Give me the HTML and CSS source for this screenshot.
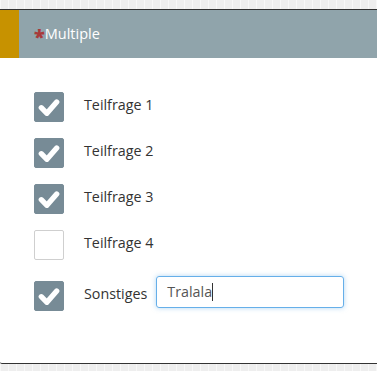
FILE: index.html
```html
<!DOCTYPE html>
<html lang="de">
<head>
    <meta charset="UTF-8">
    <meta name="viewport" content="width=device-width, initial-scale=1.0">
    <title>Multiple</title>
    <link rel="stylesheet" href="styles.css">
</head>
<body>
    <div class="question">
        <div class="question-head">
            <div class="marker"></div>
            <div class="title"><span class="required">*</span>Multiple</div>
        </div>

        <div class="options">
            <div class="option">
                <div class="checkbox checked"><svg viewBox="0 0 20 20"><path d="M4.5 10.5 L8.5 14.5 L15.5 6.5"/></svg></div>
                <div class="option-text">Teilfrage 1</div>
            </div>
            <div class="option">
                <div class="checkbox checked"><svg viewBox="0 0 20 20"><path d="M4.5 10.5 L8.5 14.5 L15.5 6.5"/></svg></div>
                <div class="option-text">Teilfrage 2</div>
            </div>
            <div class="option">
                <div class="checkbox checked"><svg viewBox="0 0 20 20"><path d="M4.5 10.5 L8.5 14.5 L15.5 6.5"/></svg></div>
                <div class="option-text">Teilfrage 3</div>
            </div>
            <div class="option">
                <div class="checkbox"></div>
                <div class="option-text">Teilfrage 4</div>
            </div>
            <div class="option other">
                <div class="checkbox checked"><svg viewBox="0 0 20 20"><path d="M4.5 10.5 L8.5 14.5 L15.5 6.5"/></svg></div>
                <div class="option-text">Sonstiges</div>
                <div class="other-input">Tralala<span class="caret"></span></div>
            </div>
        </div>
    </div>
</body>
</html>
```

FILE: styles.css
```css
* {
    margin: 0;
    padding: 0;
    box-sizing: border-box;
    font-family: "Open Sans", sans-serif;
}
body {
    padding-top: 9px;
    background-color: #eeeeee;
    background-image: repeating-linear-gradient(90deg, rgba(255,255,255,0.5) 0 1px, transparent 1px 8px);
    overflow: hidden;
}
.question {
    height: 355px;
    background-color: white;
    border-top: 1px solid #333;
    border-bottom: 1px solid #333;
    border-bottom-left-radius: 2px;
}
.question-head {
    display: flex;
    height: 48px;
    background-color: #90a4ab;
}
.marker {
    width: 19px;
    background-color: #c79200;
}
.title {
    display: flex;
    align-items: center;
    padding-left: 15px;
    padding-bottom: 1px;
    color: white;
    font-size: 14.5px;
}
.required {
    color: #a83a3a;
    font-size: 20px;
    font-weight: 800;
    line-height: 1;
    margin-top: 6px;
    margin-right: 0;
}
.options {
    display: flex;
    flex-direction: column;
    gap: 16px;
    padding: 34px 0 0 34px;
}
.option {
    display: flex;
    align-items: center;
    height: 30px;
}
.option.other {
    margin-top: 5px;
}
.checkbox {
    width: 30px;
    height: 30px;
    border: 1px solid #cfcfcf;
    border-radius: 2px;
    margin-right: 20px;
    background-color: white;
}
.checkbox.checked {
    border-color: #778b96;
    background-color: #778b96;
}
.checkbox svg {
    display: block;
    width: 28px;
    height: 28px;
}
.checkbox path {
    fill: none;
    stroke: white;
    stroke-width: 3.8;
    stroke-linecap: round;
    stroke-linejoin: round;
}
.option-text {
    font-size: 14.3px;
    color: #333;
    padding-bottom: 5px;
}
.other-input {
    width: 188px;
    height: 32px;
    margin-left: 9px;
    margin-bottom: 9px;
    padding: 5px 10px;
    border: 1px solid #66afe9;
    border-radius: 3px;
    box-shadow: 0 0 5px rgba(102,175,233,0.5);
    font-size: 14.3px;
    color: #555;
    display: flex;
    align-items: center;
}
.caret {
    display: inline-block;
    width: 1px;
    height: 18px;
    background-color: #333;
}
```
